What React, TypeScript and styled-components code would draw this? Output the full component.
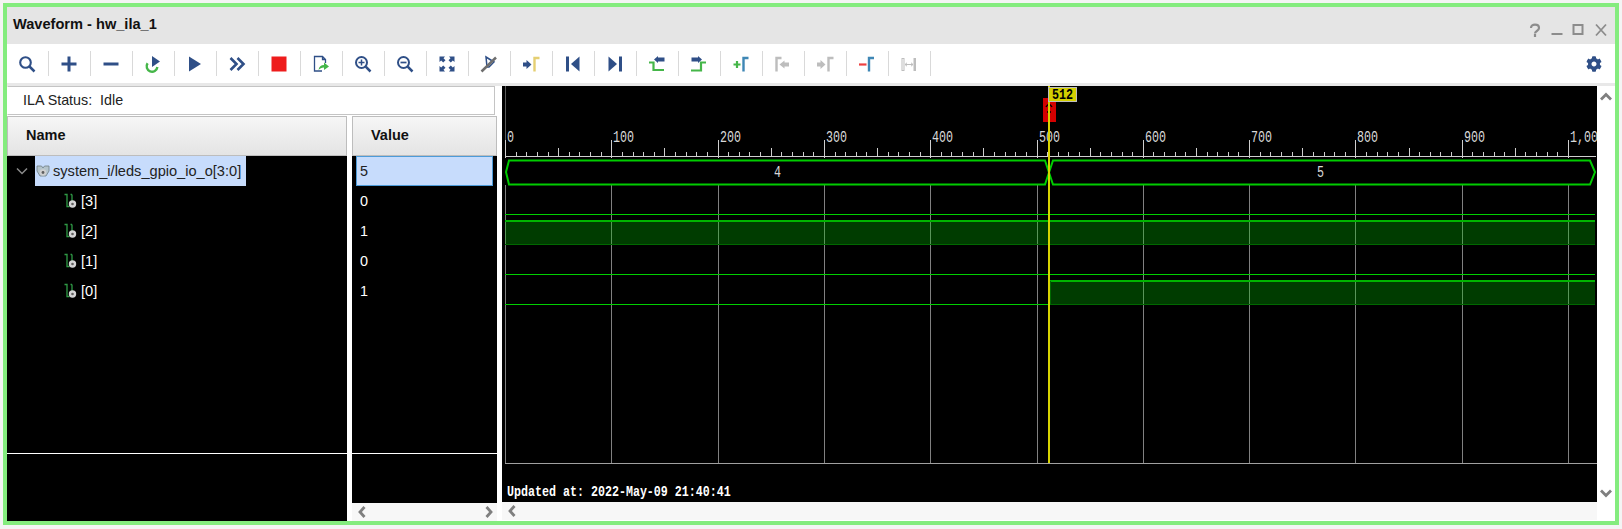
import React from "react";
import styled, { createGlobalStyle } from "styled-components";
import { FaCog } from "react-icons/fa";

const BLUE = "#2f4f87";
const GREEN = "#45b649";
const STEEL = "#3f87b5";
const GREY = "#bdbdbd";

const Global = createGlobalStyle`
  html, body { margin: 0; padding: 0; background: #f4f4f4; }
  body { font-family: "Liberation Sans", Arial, sans-serif; }
  #root { width: 1622px; height: 529px; overflow: hidden; }
`;

const Page = styled.div`
  box-sizing: border-box;
  width: 1622px;
  height: 529px;
  padding: 3px;
`;

const Frame = styled.div`
  box-sizing: border-box;
  width: 1616px;
  height: 522px;
  border: 4px solid #84ec7e;
  display: flex;
  flex-direction: column;
  background: #ffffff;
`;

const TitleBar = styled.div`
  height: 37px;
  flex: none;
  background: #e5e5e5;
  display: flex;
  justify-content: space-between;
  padding: 0 6px 0 6px;
`;

const Title = styled.div`
  font-size: 14.6px;
  font-weight: 700;
  color: #111;
  line-height: 35px;
`;

const WindowControls = styled.svg`
  width: 86px;
  height: 20px;
  margin-top: 13px;
`;

const Toolbar = styled.div`
  height: 39px;
  flex: none;
  display: flex;
  align-items: center;
  background: #fff;
  border-bottom: 3px solid #e8e8e8;
  box-sizing: content-box;
`;

const ToolButton = styled.div`
  box-sizing: border-box;
  width: 42px;
  height: 25px;
  flex: none;
  display: flex;
  align-items: center;
  justify-content: center;
  border-right: 1.5px solid #d9d9d9;
  padding-right: 2px;
`;

const Gear = styled.div`
  margin-left: auto;
  margin-right: 13px;
  display: flex;
  color: ${BLUE};
`;

const Glyph = styled.svg`
  width: 16px;
  height: 16px;
  display: block;
  overflow: visible;
`;

const Main = styled.div`
  flex: 1;
  min-height: 0;
  display: flex;
`;

const LeftPane = styled.div`
  width: 495px;
  flex: none;
  display: flex;
  flex-direction: column;
  background: #fff;
`;

const Status = styled.div`
  box-sizing: border-box;
  width: 488px;
  height: 29px;
  flex: none;
  border: 1px solid #c4c4c4;
  border-left-color: #fff;
  background: #fff;
  padding-left: 15px;
  font-size: 14.3px;
  line-height: 27px;
  color: #222;
  white-space: pre;
`;

const Columns = styled.div`
  flex: 1;
  min-height: 0;
  margin-top: 1px;
  display: flex;
  gap: 5px;
`;

const Column = styled.div<{ $width: number }>`
  width: ${(p) => p.$width}px;
  flex: none;
  display: flex;
  flex-direction: column;
`;

const HeaderCell = styled.div<{ $pad: number }>`
  box-sizing: border-box;
  height: 40px;
  flex: none;
  border: 1px solid #bdbdbd;
  background: linear-gradient(#f6f6f6, #e4e4e4);
  padding-left: ${(p) => p.$pad}px;
  font-size: 14.5px;
  font-weight: 700;
  line-height: 37px;
  color: #111;
`;

const ListBody = styled.div`
  height: 297px;
  flex: none;
  background: #000;
  border-bottom: 1px solid #fff;
`;

const ListFooter = styled.div`
  flex: 1;
  background: #000;
`;

const Row = styled.div<{ $indent: number }>`
  height: 30px;
  display: flex;
  align-items: center;
  padding-left: ${(p) => p.$indent}px;
`;

const Chevron = styled.svg`
  width: 12px;
  height: 8px;
  margin: 0 7px 0 9px;
  flex: none;
`;

const NameCell = styled.div<{ $selected?: boolean }>`
  height: 30px;
  display: flex;
  align-items: center;
  gap: 3px;
  padding: 0 5px 0 ${(p) => (p.$selected ? 1 : 0)}px;
  background: ${(p) => (p.$selected ? "#c7dcfc" : "transparent")};
  color: ${(p) => (p.$selected ? "#222" : "#fff")};
  font-size: 14.6px;
`;

const SignalGlyph = styled.svg`
  width: 14px;
  height: 16px;
  flex: none;
`;

const ValueRow = styled.div<{ $selected?: boolean }>`
  box-sizing: border-box;
  height: 30px;
  margin: 0 4px;
  padding-left: ${(p) => (p.$selected ? 3 : 4)}px;
  border: ${(p) => (p.$selected ? "1px solid #4d9bd8" : "none")};
  background: ${(p) => (p.$selected ? "#c7dcfc" : "transparent")};
  color: ${(p) => (p.$selected ? "#222" : "#fff")};
  font-size: 14.4px;
  line-height: ${(p) => (p.$selected ? 28 : 30)}px;
`;

const HScroll = styled.div`
  box-sizing: border-box;
  height: 18px;
  flex: none;
  background: #f7f7f7;
  display: flex;
  align-items: center;
  justify-content: space-between;
  padding: 0 2px 0 4px;
`;

const WavePane = styled.div`
  flex: 1;
  min-width: 0;
  display: flex;
  background: #fff;
`;

const WaveColumn = styled.div`
  width: 1095px;
  flex: none;
  display: flex;
  flex-direction: column;
`;

const Chart = styled.svg`
  width: 1095px;
  height: 416px;
  display: block;
  background: #000;
  flex: none;
`;

const VScroll = styled.div`
  flex: 1;
  height: 416px;
  display: flex;
  flex-direction: column;
  align-items: center;
  justify-content: space-between;
  padding: 4px 0 2px;
  box-sizing: border-box;
`;

const Mono = styled.text`
  font-family: "Liberation Mono", "DejaVu Sans Mono", monospace;
  font-size: 11.67px;
`;

const RulerText = styled(Mono)`
  fill: #d8d8d8;
`;

const CursorText = styled(Mono)`
  fill: #000;
  font-weight: 700;
`;

const StampText = styled(Mono)`
  fill: #fff;
  font-weight: 700;
`;

const ScrollArrow = ({ d }: { d: string }) => (
  <svg width="12" height="14" viewBox="0 0 12 14">
    <path d={d} fill="none" stroke="#7f7f7f" strokeWidth="2.8" />
  </svg>
);

const Doc = ({ children }: { children: React.ReactNode }) => (
  <Glyph viewBox="0 0 16 16">{children}</Glyph>
);

const Flag = ({ x, color }: { x: number; color: string }) => (
  <path d={`M${x} 15.5V2H${x + 5}`} fill="none" stroke={color} strokeWidth="2.4" />
);

const icons: React.ReactNode[] = [
  <>
    <circle cx="6.5" cy="6.5" r="5.3" fill="none" stroke={BLUE} strokeWidth="2.1" />
    <path d="M10.5 10.5L15.5 15.5" stroke={BLUE} strokeWidth="2.5" />
  </>,
  <path d="M8 .5V15.5M.5 8H15.5" stroke={BLUE} strokeWidth="3" />,
  <path d="M.5 8H15.5" stroke={BLUE} strokeWidth="3" />,
  <>
    <path d="M7 0L15 5.5L7 11Z" fill={BLUE} />
    <path d="M2.6 7.2A5.4 5.4 0 1 0 12.4 11" fill="none" stroke={GREEN} strokeWidth="2.4" />
  </>,
  <path d="M2 .5L14 8L2 15.5Z" fill={BLUE} />,
  <path d="M1.5 2L7.5 8L1.5 14M8.5 2L14.5 8L8.5 14" fill="none" stroke={BLUE} strokeWidth="2.6" />,
  <rect x="0.5" y="0.5" width="15" height="15" fill="#ee1c1c" />,
  <>
    <path d="M9 15H1.5V.5H9.5L12.5 3.5V7M9.5 .5V3.5H12.5" fill="none" stroke={BLUE} strokeWidth="1.3" />
    <path d="M5.5 14C6 10.5 8 9 11 9V6.5L16 10.5L11 14V11.5C8.5 11.5 7 12.5 5.5 14Z" fill={GREEN} />
  </>,
  <>
    <circle cx="6.5" cy="6.5" r="5.5" fill="none" stroke={BLUE} strokeWidth="2" />
    <path d="M6.5 3.5V9.5M3.5 6.5H9.5" stroke={BLUE} strokeWidth="1.5" />
    <path d="M10.7 10.7L15.5 15.5" stroke={BLUE} strokeWidth="2.5" />
  </>,
  <>
    <circle cx="6.5" cy="6.5" r="5.5" fill="none" stroke={BLUE} strokeWidth="2" />
    <path d="M3.5 6.5H9.5" stroke={BLUE} strokeWidth="1.7" />
    <path d="M10.7 10.7L15.5 15.5" stroke={BLUE} strokeWidth="2.5" />
  </>,
  <>
    <path d="M.5 .5H6L4.5 2.2L6.5 4.2L4.2 6.5L2.2 4.5L.5 6Z" fill={BLUE} />
    <path d="M15.5 .5H10L11.5 2.2L9.5 4.2L11.8 6.5L13.8 4.5L15.5 6Z" fill={BLUE} />
    <path d="M.5 15.5H6L4.5 13.8L6.5 11.8L4.2 9.5L2.2 11.5L.5 10Z" fill={BLUE} />
    <path d="M15.5 15.5H10L11.5 13.8L9.5 11.8L11.8 9.5L13.8 11.5L15.5 10Z" fill={BLUE} />
  </>,
  <>
    <path d="M5 1L13 6L8 11L6 11Z" fill="none" stroke={BLUE} strokeWidth="1.5" />
    <path d="M.5 15.5L15 1.5" stroke="#6e6e6e" strokeWidth="2.5" />
  </>,
  <>
    <path d="M0 6.5H3.5V4L8.5 8.5L3.5 13V10.5H0Z" fill={BLUE} />
    <Flag x={11.5} color="#e5cf72" />
  </>,
  <>
    <rect x="1" y="0.5" width="3" height="15" fill={BLUE} />
    <path d="M14.5 .5V15.5L6 8Z" fill={BLUE} />
  </>,
  <>
    <rect x="12" y="0.5" width="3" height="15" fill={BLUE} />
    <path d="M1.5 .5V15.5L10 8Z" fill={BLUE} />
  </>,
  <>
    <path d="M0 6.5H4.5V14H15" fill="none" stroke={GREEN} strokeWidth="2.2" />
    <path d="M5 3.5L9 0V1.5H15.5V5.5H9V7Z" fill={BLUE} />
  </>,
  <>
    <path d="M0 14.5H10V6.5H15" fill="none" stroke={GREEN} strokeWidth="2.2" />
    <path d="M11 3.5L7 0V1.5H.5V5.5H7V7Z" fill={BLUE} />
  </>,
  <>
    <path d="M.5 8.5H7.5M4 5V12" stroke={GREEN} strokeWidth="2.2" />
    <Flag x={10.5} color={STEEL} />
  </>,
  <>
    <Flag x={1.5} color={GREY} />
    <path d="M4.5 8.5L9.5 4.5V6.5H14V10.5H9.5V12.5Z" fill={GREY} />
  </>,
  <>
    <path d="M0 6.5H3.5V4L8.5 8.5L3.5 13V10.5H0Z" fill={GREY} />
    <Flag x={11.5} color={GREY} />
  </>,
  <>
    <path d="M0 8.5H7.5" stroke="#ee4040" strokeWidth="2.2" />
    <Flag x={10} color={STEEL} />
  </>,
  <>
    <rect x="1" y="2.5" width="2" height="12" fill="none" stroke={GREY} strokeWidth="1" />
    <rect x="12.5" y="2" width="2.5" height="13" fill={GREY} />
    <path d="M4 8.5H12M4 8.5L6 6.8M4 8.5L6 10.2M12 8.5L10 6.8M12 8.5L10 10.2" stroke={GREY} strokeWidth="1" fill="none" />
  </>,
];

const BusIcon = () => (
  <SignalGlyph viewBox="0 0 14 16">
    <path d="M1 3H5.5L7 5L8.5 3H13V8L10 13H4L1 8Z" fill="#b4c4cc" stroke="#6f7d84" strokeWidth="0.8" />
    <circle cx="7" cy="9.5" r="3.3" fill="#d0d0d0" />
    <circle cx="7" cy="9.5" r="1.4" fill="#5f5f5f" />
  </SignalGlyph>
);

const BitIcon = () => (
  <SignalGlyph viewBox="0 0 14 16">
    <path d="M.5 1.5H3V13.5H5.5M8 1.5V8" fill="none" stroke="#2f9a45" strokeWidth="1.3" />
    <path d="M6.5 1.5H8" fill="none" stroke="#2f9a45" strokeWidth="1.3" />
    <circle cx="8.5" cy="11" r="3.7" fill="#d4d4d4" />
    <circle cx="8.5" cy="11" r="1.3" fill="#5f5f5f" />
  </SignalGlyph>
);

const X0 = 505;
const SCALE = 1.063;
const px = (u: number) => Math.round(X0 + u * SCALE);
const majors = Array.from({ length: 11 }, (_, i) => i * 100);
const ticks = Array.from({ length: 100 }, (_, i) => (i + 1) * 10).filter((u) => u % 100 !== 0);
const bits = ["[3]", "[2]", "[1]", "[0]"];
const values = ["0", "1", "0", "1"];

const Waveform = () => (
  <Chart viewBox="502 86 1095 416">
    {majors.map((u) => (
      <path key={u} d={`M${px(u) + 0.5} 185V463`} stroke="#808080" strokeWidth="1" />
    ))}
    <path d="M505.5 86V140" stroke="#5a5a5a" strokeWidth="1" />
    <path d="M505 463.5H1597" stroke="#a0a0a0" strokeWidth="1" />

    <path d="M505 156.5H1596" stroke="#cfcfcf" strokeWidth="1" />
    {majors.map((u) => (
      <path key={u} d={`M${px(u) + 0.5} 140V158`} stroke="#cfcfcf" strokeWidth="1" />
    ))}
    {ticks.map((u) => (
      <path
        key={u}
        d={`M${px(u) + 0.5} ${u % 50 === 0 ? 148 : 152}V156`}
        stroke="#cfcfcf"
        strokeWidth="1"
      />
    ))}
    {majors.map((u) => (
      <RulerText key={u} transform={`translate(${px(u) + 2} 142) scale(1 1.42)`}>
        {u === 1000 ? "1,00" : u}
      </RulerText>
    ))}

    <path
      d="M1045 160.5H509L506 172L509 184.5H1045L1053 160.5H1590L1595 172L1590 184.5H1053Z"
      fill="none"
      stroke="#00cc00"
      strokeWidth="2"
    />
    <RulerText transform="translate(774 177) scale(1 1.42)">4</RulerText>
    <RulerText transform="translate(1317 177) scale(1 1.42)">5</RulerText>

    <path d="M505 214.5H1595M505 274.5H1595M505 304.5H1049" stroke="#00d000" strokeWidth="1" />
    <rect x="505" y="221" width="1090" height="24" fill="rgba(0,200,0,0.3)" />
    <path d="M505 221H1595" stroke="#00b400" strokeWidth="2" />
    <path d="M505 244.5H1595" stroke="#006800" strokeWidth="1" />
    <rect x="1050" y="281" width="545" height="24" fill="rgba(0,200,0,0.3)" />
    <path d="M1050 281H1595" stroke="#00b400" strokeWidth="2" />
    <path d="M1050 304.5H1595M1050.5 281V305" stroke="#006800" strokeWidth="1" />

    <rect x="1043" y="98" width="13" height="24" fill="#d40000" />
    <path d="M1046 107Q1049 102 1052 107M1047 112H1048M1050 112H1051" fill="none" stroke="#000" strokeWidth="1.4" />
    <rect x="1048" y="86" width="2" height="377" fill="#d8d400" />
    <rect x="1048.5" y="87.5" width="28" height="14" fill="#d4cf00" stroke="#bdbdbd" strokeWidth="1" />
    <CursorText transform="translate(1052 99) scale(1 1.25)">512</CursorText>

    <StampText transform="translate(507 496) scale(1 1.3)">Updated at: 2022-May-09 21:40:41</StampText>
  </Chart>
);

export default function App() {
  return (
    <Page>
      <Global />
      <Frame>
        <TitleBar>
          <Title>Waveform - hw_ila_1</Title>
          <WindowControls viewBox="0 0 86 20">
            <path d="M8 8C8 3.5 16 3.5 16 8C16 11 12 11 12 13.5M12 14V17" fill="none" stroke="#8c8c8c" strokeWidth="2.2" />
            <path d="M28.5 14H39.5" stroke="#8c8c8c" strokeWidth="2" />
            <rect x="50.5" y="5" width="9" height="9" fill="none" stroke="#8c8c8c" strokeWidth="2" />
            <path d="M73 4.5L83 15.5M83 4.5L73 15.5" stroke="#8c8c8c" strokeWidth="1.8" />
          </WindowControls>
        </TitleBar>
        <Toolbar>
          {icons.map((icon, i) => (
            <ToolButton key={i}>
              <Doc>{icon}</Doc>
            </ToolButton>
          ))}
          <Gear>
            <FaCog size={16} />
          </Gear>
        </Toolbar>
        <Main>
          <LeftPane>
            <Status>{"ILA Status:  Idle"}</Status>
            <Columns>
              <Column $width={340}>
                <HeaderCell $pad={18}>Name</HeaderCell>
                <ListBody>
                  <Row $indent={0}>
                    <Chevron viewBox="0 0 12 8">
                      <path d="M1 1.5L6 6.5L11 1.5" fill="none" stroke="#8a8a8a" strokeWidth="1.5" />
                    </Chevron>
                    <NameCell $selected>
                      <BusIcon />
                      system_i/leds_gpio_io_o[3:0]
                    </NameCell>
                  </Row>
                  {bits.map((b) => (
                    <Row key={b} $indent={57}>
                      <NameCell>
                        <BitIcon />
                        {b}
                      </NameCell>
                    </Row>
                  ))}
                </ListBody>
                <ListFooter />
              </Column>
              <Column $width={145}>
                <HeaderCell $pad={18}>Value</HeaderCell>
                <ListBody>
                  <ValueRow $selected>5</ValueRow>
                  {values.map((v, i) => (
                    <ValueRow key={i}>{v}</ValueRow>
                  ))}
                </ListBody>
                <ListFooter />
                <HScroll>
                  <ScrollArrow d="M8.5 2L4 7L8.5 12" />
                  <ScrollArrow d="M3.5 2L8 7L3.5 12" />
                </HScroll>
              </Column>
            </Columns>
          </LeftPane>
          <WavePane>
            <WaveColumn>
              <Waveform />
              <HScroll>
                <ScrollArrow d="M8.5 2L4 7L8.5 12" />
              </HScroll>
            </WaveColumn>
            <VScroll>
              <ScrollArrow d="M1 9.5L6 4.5L11 9.5" />
              <ScrollArrow d="M1 4.5L6 9.5L11 4.5" />
            </VScroll>
          </WavePane>
        </Main>
      </Frame>
    </Page>
  );
}
